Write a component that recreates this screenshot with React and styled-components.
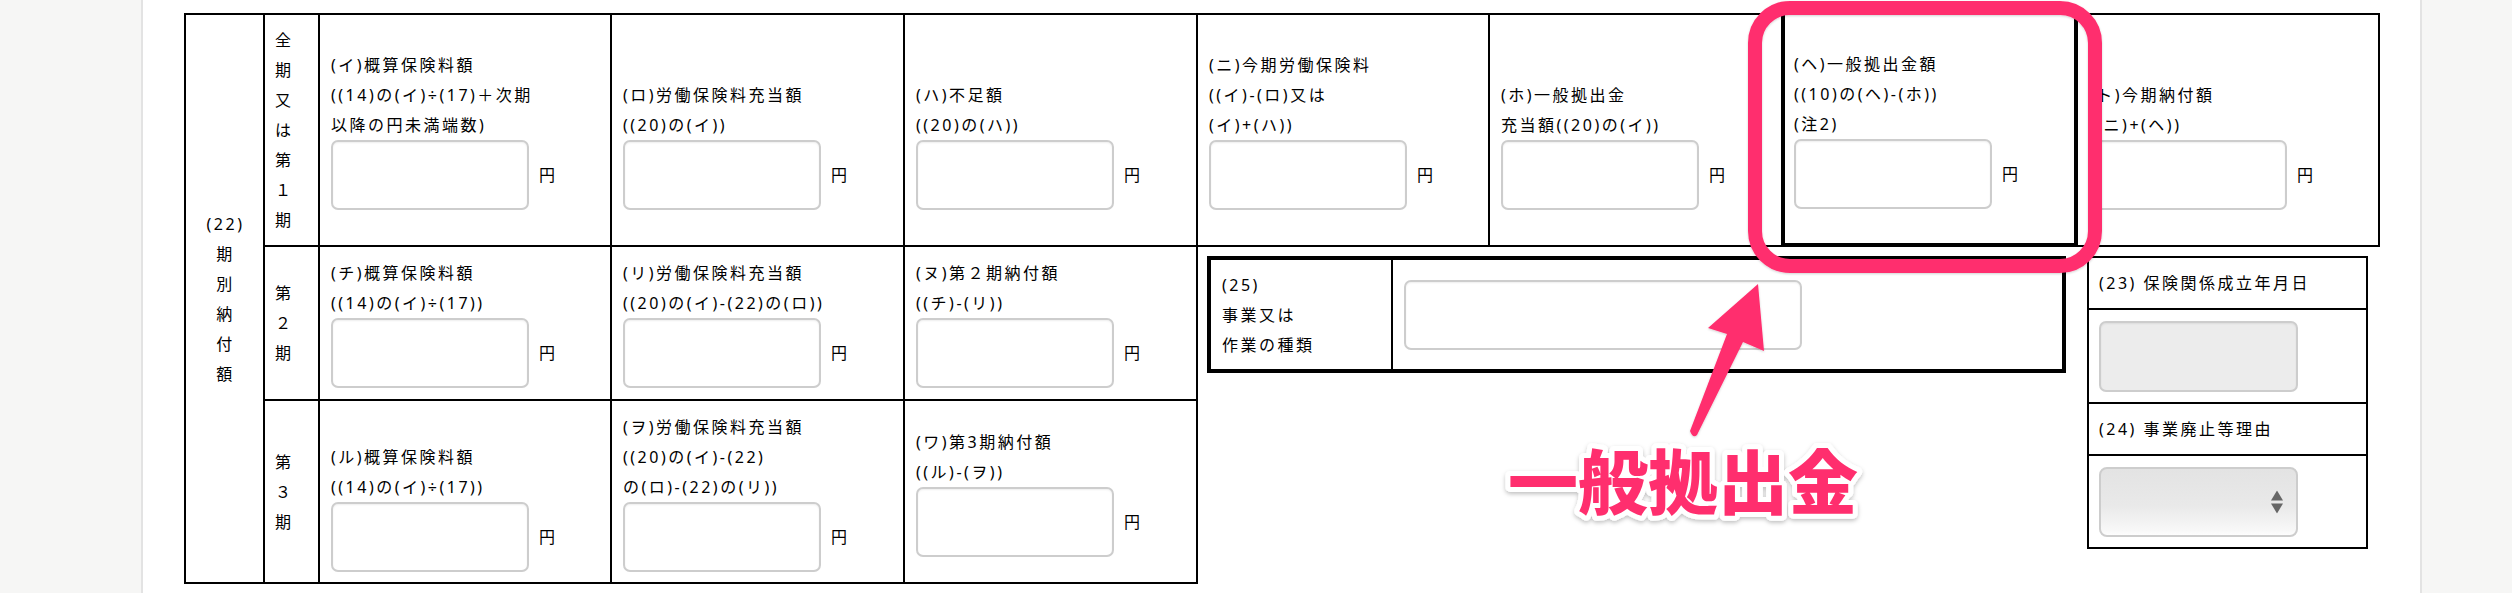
import React from 'react';
import styled, { createGlobalStyle, css } from 'styled-components';

const PINK = '#ff2f6e';

const GlobalStyle = createGlobalStyle`
  html, body { margin: 0; padding: 0; }
  body {
    background: #f6f6f5;
    font-family: "Noto Sans", "Noto Sans CJK JP", sans-serif;
    color: #000;
  }
  * { box-sizing: border-box; }
`;

const Page = styled.div`
  position: relative;
  display: flex;
  width: 2512px;
  height: 593px;
  overflow: hidden;
  background: #f6f6f5;
`;

const Gutter = styled.div`
  flex: none;
  width: 141px;
`;

const Panel = styled.main`
  flex: none;
  width: 2281px;
  background: #fff;
  border-left: 2px solid #e3e3e3;
  border-right: 2px solid #e3e3e3;
  padding: 13px 0 0 41px;
  font-size: 16px;
  letter-spacing: 2.5px;
  line-height: 30px;
`;

const Sheet = styled.div`
  display: grid;
  grid-template-columns: 79px 55px 292px 293px 293px 292px 293px 295px 302px;
  grid-template-rows: 232px 154px 183px;
  width: max-content;
  border-top: 2px solid #000;
  border-left: 2px solid #000;
`;

const Cell = styled.div`
  border-right: 2px solid #000;
  border-bottom: 2px solid #000;
`;

const GroupLabel = styled(Cell)`
  grid-row: 1 / 4;
  grid-column: 1;
  display: flex;
  flex-direction: column;
  justify-content: center;
  align-items: center;
  padding-left: 2px;
`;

const PeriodLabel = styled(Cell)`
  grid-column: 2;
  display: flex;
  flex-direction: column;
  justify-content: center;
  padding-left: 10px;
`;

const Stack = styled.span`
  display: block;
  white-space: nowrap;
`;

const Field = styled(Cell)`
  display: flex;
  flex-direction: column;
  justify-content: center;
  padding: 0 11px;
  ${p => p.$emph && css`
    border-left: 2px solid #000;
    border-right-width: 4px;
    border-bottom-width: 4px;
    padding-left: 9px;
  `}
`;

const Caption = styled.div`
  min-height: ${p => p.$slots * 30}px;
  display: flex;
  flex-direction: column;
  justify-content: flex-end;
`;

const CaptionLine = styled.span`
  display: block;
  white-space: nowrap;
`;

const Amount = styled.div`
  display: flex;
  align-items: center;
  gap: 10px;
`;

const TextBox = styled.input`
  flex: none;
  width: ${p => p.$w || 198}px;
  height: ${p => p.$h || 70}px;
  margin: 0;
  padding: 0 8px;
  border: 2px solid #cdcdcd;
  border-radius: 7px;
  background: ${p => (p.$muted ? '#ececec' : '#fff')};
  box-shadow: inset 0 1px 2px rgba(0, 0, 0, 0.07);
  font: inherit;
  outline: none;
`;

const Yen = styled.span`
  white-space: nowrap;
`;

const SideArea = styled.div`
  grid-column: 6 / 10;
  grid-row: 2 / 4;
  display: flex;
  align-items: flex-start;
  gap: 21px;
  padding: 9px 0 0 9px;
`;

const BizBox = styled.div`
  flex: none;
  display: flex;
  width: 859px;
  height: 117px;
  border: 4px solid #000;
`;

const BizLabel = styled.div`
  flex: none;
  width: 182px;
  border-right: 2px solid #000;
  padding: 0 11px;
  display: flex;
  flex-direction: column;
  justify-content: center;
`;

const BizField = styled.div`
  flex: 1;
  padding: 0 11px;
  display: flex;
  align-items: center;
`;

const InfoBox = styled.div`
  flex: none;
  width: 281px;
  border: 2px solid #000;
  display: flex;
  flex-direction: column;
`;

const InfoRow = styled.div`
  height: ${p => p.$h}px;
  padding: 0 10px;
  display: flex;
  align-items: center;
  white-space: nowrap;
  ${p => p.$line && css`border-bottom: 2px solid #000;`}
`;

const SelectWrap = styled.div`
  position: relative;
  width: 199px;
  height: 70px;
`;

const Picker = styled.select`
  appearance: none;
  -webkit-appearance: none;
  width: 100%;
  height: 100%;
  margin: 0;
  border: 2px solid #cdcdcd;
  border-radius: 8px;
  background: linear-gradient(to bottom, #e3e3e3 0%, #e9e9e9 55%, #f7f7f7 92%, #fdfdfd 100%);
  font: inherit;
  outline: none;
`;

const PickerArrows = styled.svg`
  position: absolute;
  right: 15px;
  top: 50%;
  transform: translateY(-50%);
  pointer-events: none;
`;

const Overlay = styled.svg`
  position: absolute;
  left: 0;
  top: 0;
  pointer-events: none;
`;

const row1 = [
  { lines: ['(イ)概算保険料額', '((14)の(イ)÷(17)＋次期', '以降の円未満端数)'] },
  { lines: ['(ロ)労働保険料充当額', '((20)の(イ))'] },
  { lines: ['(ハ)不足額', '((20)の(ハ))'] },
  { lines: ['(ニ)今期労働保険料', '((イ)-(ロ)又は', '(イ)+(ハ))'] },
  { lines: ['(ホ)一般拠出金', '充当額((20)の(イ))'] },
  { lines: ['(ヘ)一般拠出金額', '((10)の(ヘ)-(ホ))', '(注2)'], emph: true },
  { lines: ['(ト)今期納付額', '((ニ)+(ヘ))'] },
];

const row2 = [
  { lines: ['(チ)概算保険料額', '((14)の(イ)÷(17))'] },
  { lines: ['(リ)労働保険料充当額', '((20)の(イ)-(22)の(ロ))'] },
  { lines: ['(ヌ)第２期納付額', '((チ)-(リ))'] },
];

const row3 = [
  { lines: ['(ル)概算保険料額', '((14)の(イ)÷(17))'], slots: 3 },
  { lines: ['(ヲ)労働保険料充当額', '((20)の(イ)-(22)', 'の(ロ)-(22)の(リ))'], slots: 3 },
  { lines: ['(ワ)第3期納付額', '((ル)-(ヲ))'], slots: 2 },
];

function AmountField({ lines, slots, emph }) {
  return (
    <Field $emph={emph}>
      <Caption $slots={slots}>
        {lines.map((l, i) => (
          <CaptionLine key={i}>{l}</CaptionLine>
        ))}
      </Caption>
      <Amount>
        <TextBox type="text" />
        <Yen>円</Yen>
      </Amount>
    </Field>
  );
}

function Vertical({ chars }) {
  return chars.map((c, i) => <Stack key={i}>{c}</Stack>);
}

export default function App() {
  return (
    <>
      <GlobalStyle />
      <Page>
        <Gutter />
        <Panel>
          <Sheet>
            <GroupLabel>
              <Vertical chars={['(22)', '期', '別', '納', '付', '額']} />
            </GroupLabel>
            <PeriodLabel>
              <Vertical chars={['全', '期', '又', 'は', '第', '１', '期']} />
            </PeriodLabel>
            {row1.map((f, i) => (
              <AmountField key={i} lines={f.lines} slots={3} emph={f.emph} />
            ))}

            <PeriodLabel>
              <Vertical chars={['第', '２', '期']} />
            </PeriodLabel>
            {row2.map((f, i) => (
              <AmountField key={i} lines={f.lines} slots={2} />
            ))}
            <SideArea>
              <BizBox>
                <BizLabel>
                  <CaptionLine>(25)</CaptionLine>
                  <CaptionLine>事業又は</CaptionLine>
                  <CaptionLine>作業の種類</CaptionLine>
                </BizLabel>
                <BizField>
                  <TextBox type="text" $w={398} $h={70} />
                </BizField>
              </BizBox>
              <InfoBox>
                <InfoRow $h={52} $line>(23) 保険関係成立年月日</InfoRow>
                <InfoRow $h={94} $line>
                  <TextBox type="text" $w={199} $h={71} $muted />
                </InfoRow>
                <InfoRow $h={52} $line>(24) 事業廃止等理由</InfoRow>
                <InfoRow $h={91}>
                  <SelectWrap>
                    <Picker defaultValue="">
                      <option value=""></option>
                    </Picker>
                    <PickerArrows width="12" height="23" viewBox="0 0 12 23">
                      <polygon points="6,0 12,10 0,10" fill="#666" />
                      <polygon points="0,13 12,13 6,23" fill="#666" />
                    </PickerArrows>
                  </SelectWrap>
                </InfoRow>
              </InfoBox>
            </SideArea>

            <PeriodLabel>
              <Vertical chars={['第', '３', '期']} />
            </PeriodLabel>
            {row3.map((f, i) => (
              <AmountField key={i} lines={f.lines} slots={f.slots} />
            ))}
          </Sheet>
        </Panel>

        <Overlay width="2512" height="593" viewBox="0 0 2512 593">
          <defs>
            <filter id="annShadow" x="-20%" y="-20%" width="140%" height="140%">
              <feDropShadow dx="0" dy="2" stdDeviation="2" floodColor="#000" floodOpacity="0.25" />
            </filter>
            <filter id="lightShadow" x="-10%" y="-10%" width="120%" height="120%">
              <feDropShadow dx="0" dy="1" stdDeviation="1.2" floodColor="#000" floodOpacity="0.18" />
            </filter>
          </defs>
          <rect
            x="1755"
            y="8"
            width="340"
            height="258"
            rx="35"
            fill="none"
            stroke={PINK}
            strokeWidth="14"
            filter="url(#lightShadow)"
          />
          <path
            d="M1690,431 L1727,334 L1708,328 L1758,284 L1764,351 L1743,342 L1697,435 Q1693,439 1690,431 Z"
            fill={PINK}
            filter="url(#lightShadow)"
          />
          <text
            x="1508"
            y="509"
            fontSize="70"
            fontWeight="900"
            fontFamily='"Noto Sans CJK JP", sans-serif'
            fill={PINK}
            stroke="#fff"
            strokeWidth="10"
            strokeLinejoin="round"
            paintOrder="stroke"
            filter="url(#annShadow)"
          >
            一般拠出金
          </text>
        </Overlay>
      </Page>
    </>
  );
}
